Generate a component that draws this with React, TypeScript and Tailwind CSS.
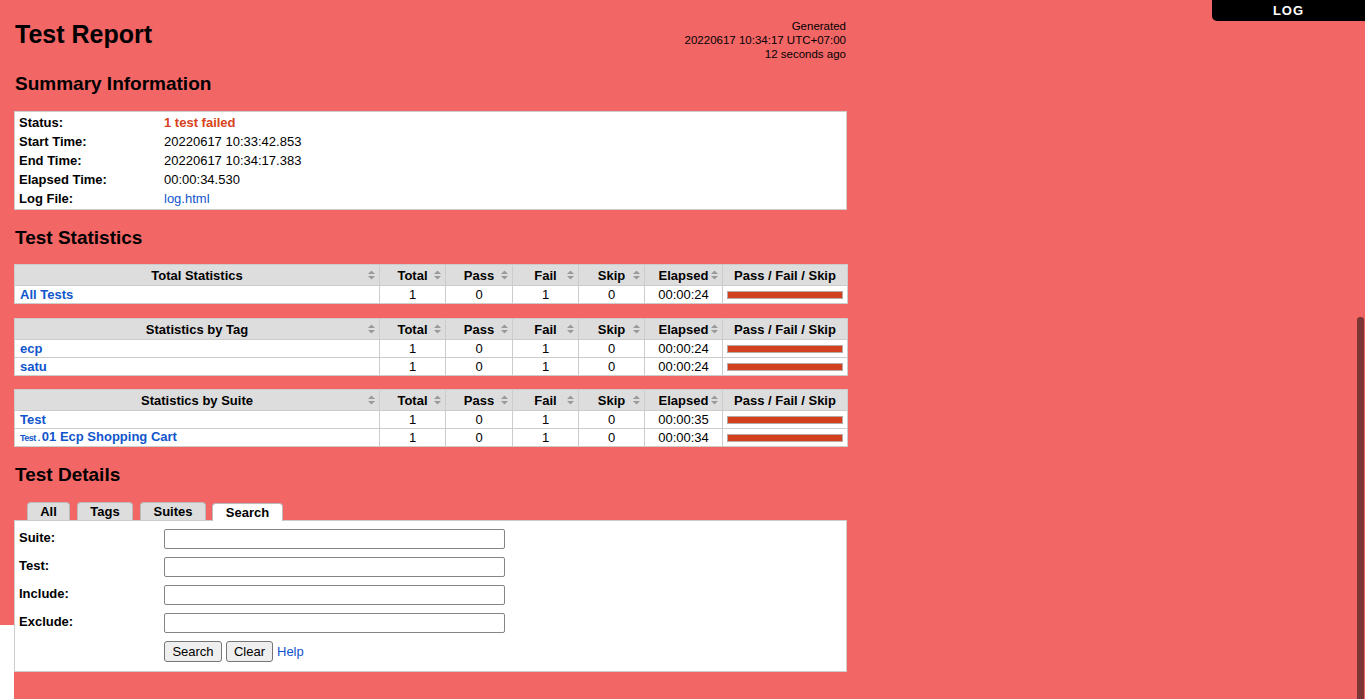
import React from "react"

type StatRow = {
  name: React.ReactNode
  total: number
  pass: number
  fail: number
  skip: number
  elapsed: string
}

const totalRows: StatRow[] = [
  { name: "All Tests", total: 1, pass: 0, fail: 1, skip: 0, elapsed: "00:00:24" },
]

const tagRows: StatRow[] = [
  { name: "ecp", total: 1, pass: 0, fail: 1, skip: 0, elapsed: "00:00:24" },
  { name: "satu", total: 1, pass: 0, fail: 1, skip: 0, elapsed: "00:00:24" },
]

const suiteRows: StatRow[] = [
  { name: "Test", total: 1, pass: 0, fail: 1, skip: 0, elapsed: "00:00:35" },
  {
    name: (
      <>
        <span className="text-[9px] tracking-[-0.5px]">Test .</span>
        <span className="ml-[2px]">01 Ecp Shopping Cart</span>
      </>
    ),
    total: 1,
    pass: 0,
    fail: 1,
    skip: 0,
    elapsed: "00:00:34",
  },
]

function SortIcon() {
  return (
    <svg
      width="7"
      height="9"
      viewBox="0 0 7 9"
      className="absolute right-[4px] top-1/2 -translate-y-1/2"
    >
      <polygon points="3.5,0 7,3.6 0,3.6" fill="#999" />
      <polygon points="0,5.4 7,5.4 3.5,9" fill="#999" />
    </svg>
  )
}

function StatTable({ title, rows }: { title: string; rows: StatRow[] }) {
  const heads = ["Total", "Pass", "Fail", "Skip", "Elapsed"]
  const td = "h-[18px] p-0 border border-[#ccc] text-center"
  const th = "relative h-[21px] p-0 border border-[#ccc] font-bold text-center"
  return (
    <table className="w-[833px] table-fixed border-collapse bg-white border border-[#ccc] leading-[15px]">
      <colgroup>
        <col className="w-[365px]" />
        <col className="w-[66px]" />
        <col className="w-[67px]" />
        <col className="w-[66px]" />
        <col className="w-[66px]" />
        <col className="w-[78px]" />
        <col className="w-[125px]" />
      </colgroup>
      <thead>
        <tr className="bg-[#ddd]">
          <th className={th}>
            {title}
            <SortIcon />
          </th>
          {heads.map((h) => (
            <th key={h} className={th}>
              {h}
              <SortIcon />
            </th>
          ))}
          <th className={th}>Pass / Fail / Skip</th>
        </tr>
      </thead>
      <tbody>
        {rows.map((r, i) => (
          <tr key={i}>
            <td className="h-[18px] py-0 pl-[5px] border border-[#ccc] font-bold text-[#15c] whitespace-nowrap">
              {r.name}
            </td>
            <td className={td}>{r.total}</td>
            <td className={td}>{r.pass}</td>
            <td className={td}>{r.fail}</td>
            <td className={td}>{r.skip}</td>
            <td className={td}>{r.elapsed}</td>
            <td className="h-[18px] py-0 px-[4px] border border-[#ccc]">
              <div className="h-[8px] border border-[#b9a8a4] bg-[#d2401e]" />
            </td>
          </tr>
        ))}
      </tbody>
    </table>
  )
}

function SearchRow({ label }: { label: string }) {
  return (
    <div className="flex items-start mb-[8px]">
      <div className="w-[149px] pl-[4px] pt-[1px] font-bold leading-[15px]">{label}</div>
      <input
        type="text"
        className="w-[341px] h-[20px] border border-[#858585] rounded-[2px] bg-white outline-none"
      />
    </div>
  )
}

export default function App() {
  const summary: [string, React.ReactNode][] = [
    ["Status:", <span className="font-bold text-[#d8431b]">1 test failed</span>],
    ["Start Time:", "20220617 10:33:42.853"],
    ["End Time:", "20220617 10:34:17.383"],
    ["Elapsed Time:", "00:00:34.530"],
    ["Log File:", <span className="text-[#15c]">log.html</span>],
  ]

  const tab = "h-[18px] border-x border-t border-[#bbb] rounded-t-[4px] bg-[#ddd] font-bold text-center leading-[17px]"

  return (
    <div className="relative h-[699px] overflow-hidden bg-[#f36666] font-['Liberation_Sans',Arial,sans-serif] text-[13px] text-black">
      {/* LOG tab */}
      <div className="absolute top-0 right-0 w-[153px] h-[21px] bg-black rounded-bl-[5px] flex items-center justify-center text-white font-bold text-[13px] tracking-[1px]">
        LOG
      </div>

      <div className="w-[833px] ml-[14px] pt-[19px]">
        <div className="flex justify-between items-start">
          <h1 className="pl-px text-[25px] font-bold leading-[30px]">Test Report</h1>
          <div className="pr-px text-right text-[11.5px] leading-[14px]">
            <div>Generated</div>
            <div>20220617 10:34:17 UTC+07:00</div>
            <div>12 seconds ago</div>
          </div>
        </div>

        <h2 className="mt-[12px] pl-px text-[19px] font-bold leading-[22px]">Summary Information</h2>
        <div className="mt-[16px] bg-white border border-[#ccc] py-px">
          {summary.map(([k, v]) => (
            <div key={k} className="flex h-[19px] items-center">
              <div className="w-[149px] pl-[4px] font-bold">{k}</div>
              <div>{v}</div>
            </div>
          ))}
        </div>

        <h2 className="mt-[17px] pl-px text-[19px] font-bold leading-[22px]">Test Statistics</h2>
        <div className="mt-[15px]">
          <StatTable title="Total Statistics" rows={totalRows} />
        </div>
        <div className="mt-[14px]">
          <StatTable title="Statistics by Tag" rows={tagRows} />
        </div>
        <div className="mt-[13px]">
          <StatTable title="Statistics by Suite" rows={suiteRows} />
        </div>

        <h2 className="mt-[17px] pl-px text-[19px] font-bold leading-[22px]">Test Details</h2>
        <div className="mt-[16px] ml-[13px] flex items-end h-[18px]">
          <div className={`w-[43px] ${tab}`}>All</div>
          <div className={`ml-[7px] w-[56px] ${tab}`}>Tags</div>
          <div className={`ml-[7px] w-[66px] ${tab}`}>Suites</div>
          <div className="relative z-10 -mb-px ml-[6px] w-[71px] h-[18px] border-x border-t border-[#bbb] rounded-t-[4px] bg-white font-bold text-center leading-[18px]">
            Search
          </div>
        </div>
        <div className="bg-white border border-[#ccc] pt-[8px] pb-[9px]">
          <SearchRow label="Suite:" />
          <SearchRow label="Test:" />
          <SearchRow label="Include:" />
          <SearchRow label="Exclude:" />
          <div className="flex items-center pl-[149px]">
            <button className="w-[58px] h-[21px] bg-[#efefef] border border-[#767676] rounded-[3px] text-[13px]">
              Search
            </button>
            <button className="ml-[4px] w-[47px] h-[21px] bg-[#efefef] border border-[#767676] rounded-[3px] text-[13px]">
              Clear
            </button>
            <span className="ml-[4px] text-[#15c]">Help</span>
          </div>
        </div>
      </div>

      {/* window edge artifacts */}
      <div className="absolute left-0 top-[625px] bottom-0 w-[14px] bg-white" />
      <div className="absolute right-[1px] top-[317px] bottom-0 w-[7px] rounded-t-[3px] bg-[#7b3535]" />
    </div>
  )
}
